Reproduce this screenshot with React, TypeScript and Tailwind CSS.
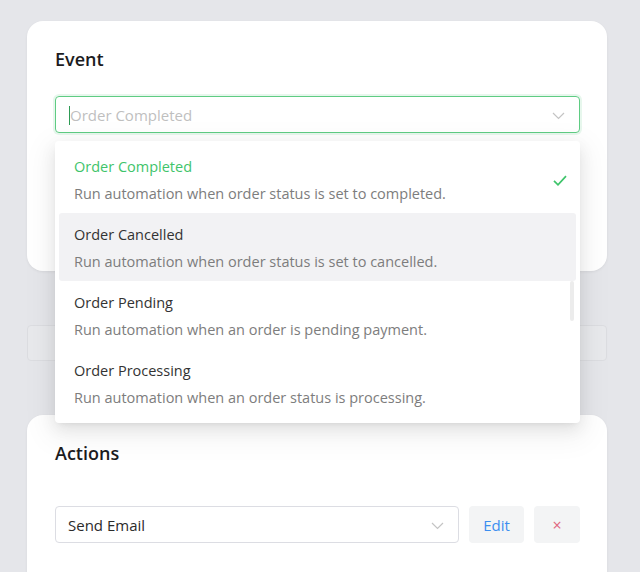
import React from 'react';

type EventOption = {
    id: string;
    label: string;
    description: string;
};

const EVENTS: EventOption[] = [
    { id: 'completed', label: 'Order Completed', description: 'Run automation when order status is set to completed.' },
    { id: 'cancelled', label: 'Order Cancelled', description: 'Run automation when order status is set to cancelled.' },
    { id: 'pending', label: 'Order Pending', description: 'Run automation when an order is pending payment.' },
    { id: 'processing', label: 'Order Processing', description: 'Run automation when an order status is processing.' },
];

const Chevron: React.FC = () => (
    <svg width="13" height="8" viewBox="0 0 13 8" fill="none" className="shrink-0">
        <path d="M1 1l5.5 5.5L12 1" stroke="#c4c4c4" strokeWidth="1.2" />
    </svg>
);

const Check: React.FC = () => (
    <svg width="14" height="11" viewBox="0 0 14 11" fill="none">
        <path d="M1 5.8l4 4L13 1.2" stroke="#3fc46b" strokeWidth="1.7" />
    </svg>
);

export default function App() {
    const selected = 'completed';
    const hovered = 'cancelled';

    return (
        <div className="h-[572px] overflow-hidden bg-[#e5e6ea] pt-[21px] pr-[33px] pl-[27px] font-['Open_Sans',sans-serif]">
            {/* Event card */}
            <div className="h-[250px] rounded-2xl bg-white pt-[26px] pr-[27px] pl-[28px] shadow-[0_1px_3px_rgba(0,0,0,0.06)]">
                <h2 className="text-[18px] leading-6 font-semibold text-[#1c1c1e]">Event</h2>

                <div className="relative mt-[25px]">
                    <div className="flex h-[37px] items-center justify-between rounded-[4px] border border-[#5fcc83] pt-[2px] pr-[14px] pl-[13px] shadow-[0_0_0_2px_rgba(95,204,131,0.15)]">
                        <div className="flex items-center">
                            <span className="h-[19px] w-px bg-[#2e9b55]" />
                            <span className="text-[15px] text-[#bfbfbf]">Order Completed</span>
                        </div>
                        <Chevron />
                    </div>

                    {/* Dropdown menu */}
                    <div className="absolute top-[45px] right-0 left-0 z-10 h-[282px] overflow-hidden rounded-[4px] bg-white p-1 shadow-[0_6px_16px_0_rgba(0,0,0,0.08),0_3px_6px_-4px_rgba(0,0,0,0.12),0_9px_28px_8px_rgba(0,0,0,0.05)]">
                        {EVENTS.map((ev) => (
                            <div
                                key={ev.id}
                                className={
                                    ev.id === hovered
                                        ? 'flex h-[68px] items-center justify-between rounded-[3px] bg-[#f2f2f4] pt-[2px] pr-[9px] pl-[15px]'
                                        : 'flex h-[68px] items-center justify-between pt-[2px] pr-[9px] pl-[15px]'
                                }
                            >
                                <div className="flex flex-col gap-[5px]">
                                    <span
                                        className={
                                            ev.id === selected
                                                ? 'text-[14.5px] leading-[22px] text-[#3fc46b]'
                                                : 'text-[14.5px] leading-[22px] text-[#333]'
                                        }
                                    >
                                        {ev.label}
                                    </span>
                                    <span className="text-[14.5px] leading-[22px] text-[#7d7d7d]">{ev.description}</span>
                                </div>
                                {ev.id === selected && <Check />}
                            </div>
                        ))}
                        <div className="absolute top-[140px] right-[6px] h-[40px] w-[4px] rounded-full bg-[#ececec]" />
                    </div>
                </div>
            </div>

            {/* Condition placeholder */}
            <div className="mt-[54px] h-[36px] rounded-[4px] border border-[#dcdde1] bg-[#e8e9ec]" />

            {/* Actions card */}
            <div className="mt-[54px] h-[200px] rounded-2xl bg-white pt-[26px] pr-[27px] pl-[28px] shadow-[0_1px_3px_rgba(0,0,0,0.06)]">
                <h2 className="text-[18px] leading-6 font-semibold text-[#1c1c1e]">Actions</h2>

                <div className="mt-[41px] flex gap-[10px]">
                    <div className="flex h-[37px] flex-1 items-center justify-between rounded-[4px] border border-[#dcdde3] pt-[2px] pr-[14px] pl-[12px]">
                        <span className="text-[15px] text-[#2b2b2b]">Send Email</span>
                        <Chevron />
                    </div>
                    <button className="h-[37px] w-[55px] rounded-[4px] bg-[#f3f4f5] pt-[2px] text-[15px] text-[#3b8ef0]">Edit</button>
                    <button className="flex h-[37px] w-[46px] items-center justify-center rounded-[4px] bg-[#f3f4f5] text-[16px] text-[#e0667f]">
                        ×
                    </button>
                </div>
            </div>
        </div>
    );
}
